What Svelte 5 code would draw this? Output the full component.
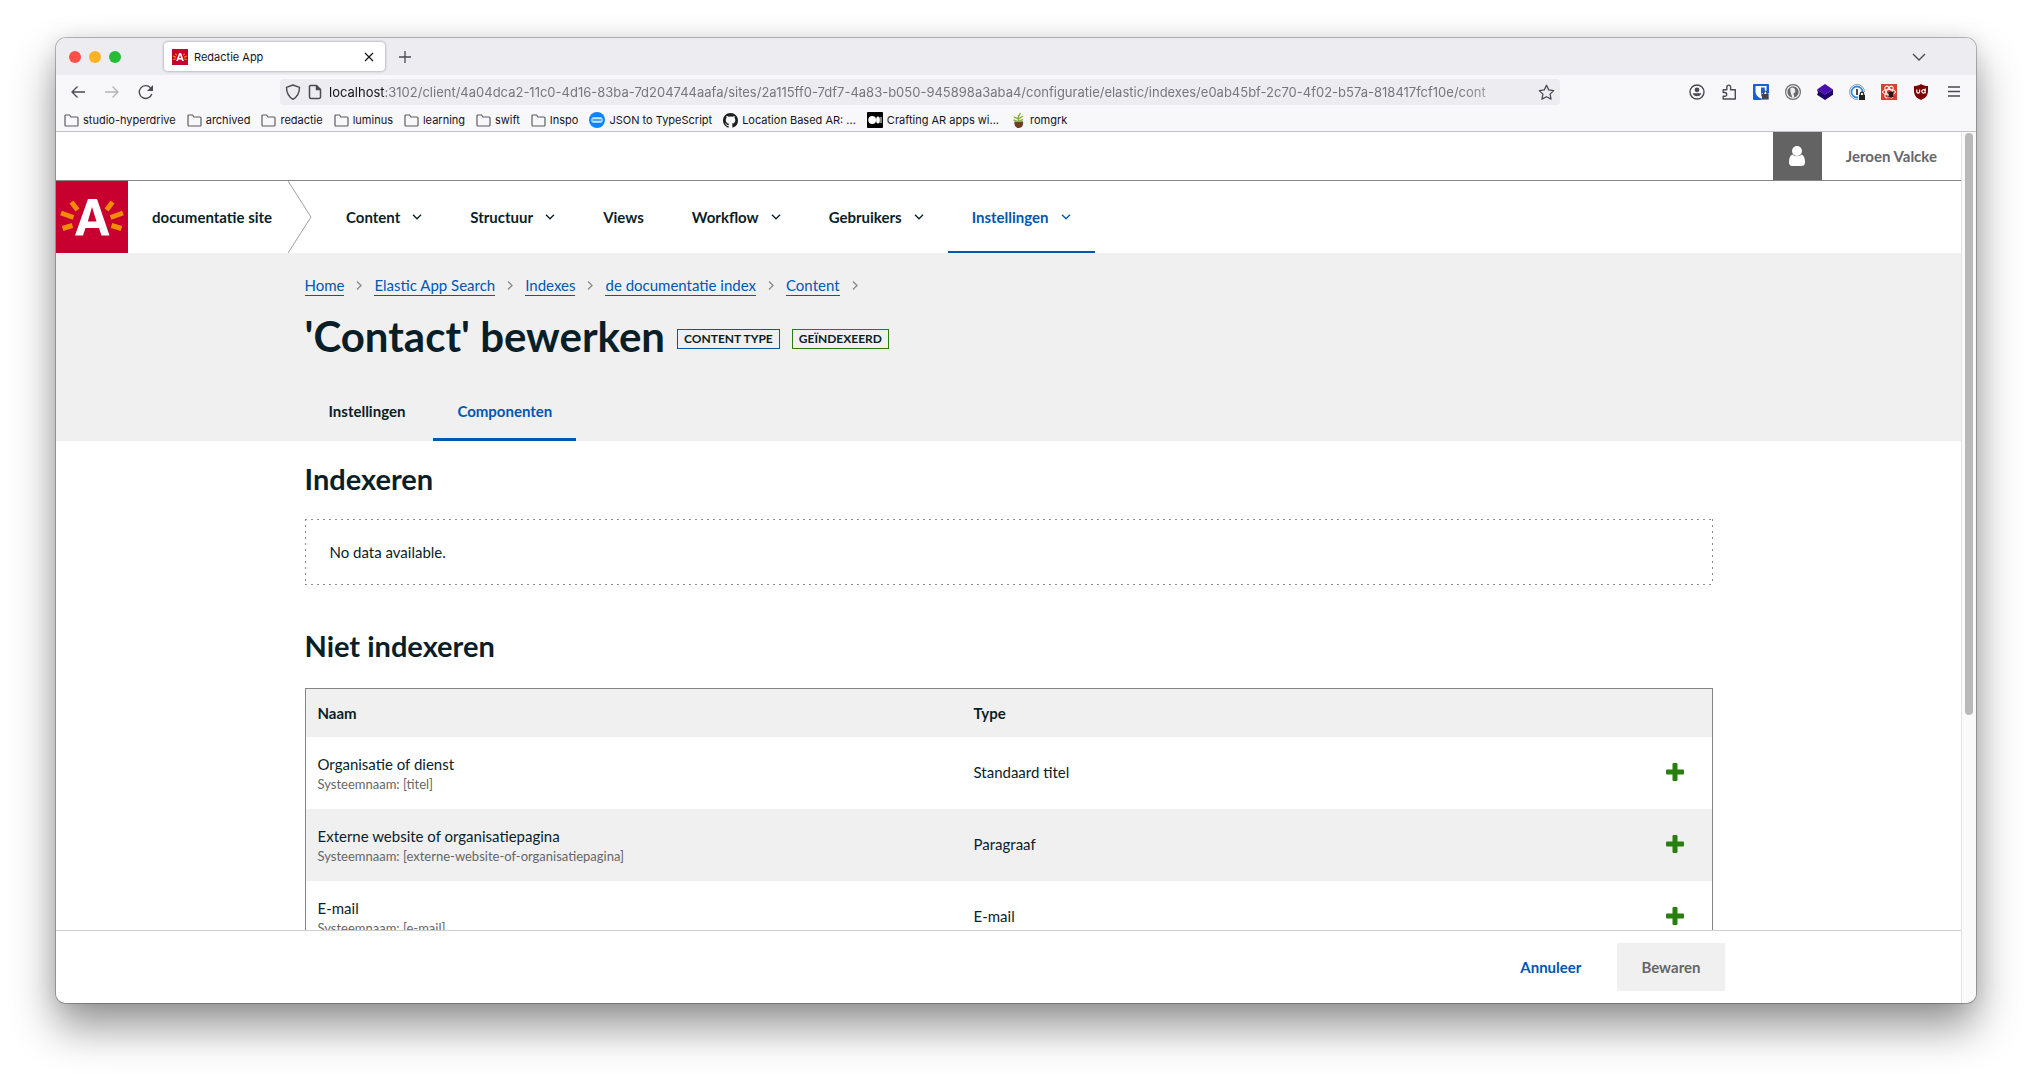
<script>
  const nav = [
    { label: 'Content', menu: true },
    { label: 'Structuur', menu: true },
    { label: 'Views', menu: false },
    { label: 'Workflow', menu: true },
    { label: 'Gebruikers', menu: true },
    { label: 'Instellingen', menu: true, active: true }
  ];
  const crumbs = ['Home', 'Elastic App Search', 'Indexes', 'de documentatie index', 'Content'];
  const folders = ['studio-hyperdrive', 'archived', 'redactie', 'luminus', 'learning', 'swift', 'Inspo'];
  const rows = [
    { name: 'Organisatie of dienst', sys: 'titel', type: 'Standaard titel' },
    { name: 'Externe website of organisatiepagina', sys: 'externe-website-of-organisatiepagina', type: 'Paragraaf' },
    { name: 'E-mail', sys: 'e-mail', type: 'E-mail' }
  ];
</script>

{#snippet brandA()}
  <rect width="72" height="72" fill="#c8002f" />
  <path d="M19 54.500 L32 18 H41 L53.500 54.500 H45.500 L43 47 H29.500 L27 54.500 Z M31.800 40.500 H40.500 L36 26 Z" fill="#fff" fill-rule="evenodd" />
  <g stroke="#f28b00" stroke-width="5">
    <path d="M15.500 21 L21.500 29 M5 32 L17.500 36.500 M6.500 47.500 L16.500 44.500 M56.500 21 L50.500 29 M67 32 L54.500 36.500 M65.500 47.500 L55.500 44.500" />
  </g>
{/snippet}

<div class="desktop">
  <div class="window">
    <div class="tabbar">
      <div class="lights"><i class="red"></i><i class="amber"></i><i class="green"></i></div>
      <div class="browser-tab">
        <svg width="16" height="16" viewBox="0 0 72 72" aria-hidden="true">{@render brandA()}</svg>
        <span>Redactie App</span>
        <button aria-label="Close tab"><svg width="10" height="10" viewBox="0 0 10 10"><path d="M1 1l8 8M9 1l-8 8" stroke="#15141a" stroke-width="1.200" /></svg></button>
      </div>
      <button class="newtab" aria-label="New tab"><svg width="12" height="12" viewBox="0 0 12 12"><path d="M6 0v12M0 6h12" stroke="#4a4954" stroke-width="1.300" /></svg></button>
      <button class="tablist" aria-label="List all tabs"><svg width="14" height="8" viewBox="0 0 14 8"><path d="M1 1l6 6 6-6" fill="none" stroke="#4a4954" stroke-width="1.400" /></svg></button>
    </div>

    <div class="toolbar">
      <div class="history">
        <button aria-label="Back"><svg width="16" height="16" viewBox="0 0 16 16" fill="none" stroke="#4a4954" stroke-width="1.300"><path d="M15 8H2M7.500 2.500L2 8l5.500 5.500" /></svg></button>
        <button aria-label="Forward" disabled><svg width="16" height="16" viewBox="0 0 16 16" fill="none" stroke="#b5b4bb" stroke-width="1.300"><path d="M1 8h13M8.500 2.500L14 8l-5.500 5.500" /></svg></button>
        <button aria-label="Reload"><svg width="16" height="16" viewBox="0 0 16 16" fill="none" stroke="#4a4954" stroke-width="1.400"><path d="M13.800 10A6.400 6.400 0 1 1 12.500 3.800" /><path d="M15 1v6H9z" fill="#4a4954" stroke="none" /></svg></button>
      </div>
      <div class="urlbar">
        <svg width="16" height="16" viewBox="0 0 16 16" fill="none" stroke="#4a4954" stroke-width="1.400" stroke-linejoin="round"><path d="M8 1l6.500 2.300c0 5-1.500 9.200-6.500 12C3 12.500 1.500 8.300 1.500 3.300z" /></svg>
        <svg width="14" height="16" viewBox="0 0 14 16" fill="none" stroke="#4a4954" stroke-width="1.500" stroke-linejoin="round"><path d="M2.500 1.500H8.500L12.500 5.500V13a1.500 1.500 0 0 1-1.500 1.500H3A1.500 1.500 0 0 1 1.500 13V2.500a1 1 0 0 1 1-1z" /><path d="M8.500 1.500V5.500H12.500" fill="#4a4954" /></svg>
        <div class="url"><b>localhost</b>:3102/client/4a04dca2-11c0-4d16-83ba-7d204744aafa/sites/2a115ff0-7df7-4a83-b050-945898a3aba4/configuratie/elastic/indexes/e0ab45bf-2c70-4f02-b57a-818417fcf10e/cont</div>
        <button aria-label="Bookmark this page"><svg width="17" height="17" viewBox="0 0 17 17"><path d="M8.500 1.300l2.200 4.600 5 .7-3.600 3.500.9 5-4.500-2.400L4 15.100l.9-5L1.300 6.600l5-.7z" fill="none" stroke="#4a4954" stroke-width="1.300" stroke-linejoin="round" /></svg></button>
      </div>
      <div class="extensions">
        <svg width="16" height="16" viewBox="0 0 16 16"><circle cx="8" cy="8" r="7" fill="none" stroke="#4a4954" stroke-width="1.400" /><circle cx="8" cy="5.800" r="2.400" fill="#4a4954" /><path d="M3.700 9.300h8.600c-.5 2-2.200 3-4.300 3s-3.800-1-4.300-3z" fill="#4a4954" /></svg>
        <svg width="16" height="16" viewBox="0 0 16 16"><path d="M2.200 5.700h3.600V3a1.900 1.900 0 0 1 3.800 0v2.700h4.700v9.300H2.200V12.300h1.600a1.900 1.900 0 0 0 0-3.800H2.200z" fill="none" stroke="#4a4954" stroke-width="1.400" stroke-linejoin="round" /></svg>
        <svg width="16" height="16" viewBox="0 0 16 16"><rect width="16" height="16" rx="1" fill="#175ddc" /><path d="M2.500 2h11v6c0 3-3 5.500-5.500 6.500-2.500-1-5.500-3.500-5.500-6.500z" fill="#fff" /><path d="M8 3.500h3.800V8c0 2-2.100 3.900-3.800 4.700z" fill="#175ddc" /><path d="M8.500 9h7.500v7H8.500z" fill="#fff" opacity=".6" /><rect x="9" y="10" width="6.500" height="5.300" fill="#444" /><path d="M10.600 10.500V8.700a1.700 1.700 0 0 1 3.400 0V10.500" fill="none" stroke="#444" stroke-width="1.200" /></svg>
        <svg width="16" height="16" viewBox="0 0 16 16"><circle cx="8" cy="8" r="7.400" fill="#fff" stroke="#6a6a6a" stroke-width="1.200" /><circle cx="8" cy="8" r="5.700" fill="#6a6a6a" /><path d="M5.500 4c2-1.200 4.300-.3 4.600 2l.2 2.200-1.800 1 .8 4.300-2 .2c-.8-3-2.800-6.700-1.800-9.700z" fill="#eee" /></svg>
        <svg width="16" height="16" viewBox="0 0 16 16"><path d="M0 5.500l8 5 8-5v5.300L8 16l-8-5.200 1-2.300z" fill="#1d0466" /><path d="M8 0l8 5.500-8 5.200-8-5.200z" fill="#4a0fb0" /></svg>
        <svg width="16" height="16" viewBox="0 0 16 16"><circle cx="8" cy="8" r="7.500" fill="#fff" stroke="#888" stroke-width=".8" /><circle cx="8" cy="8" r="5.500" fill="none" stroke="#2f8ded" stroke-width="1.800" /><path d="M8 5v6" stroke="#333" stroke-width="1.800" /><path d="M9 8h7v8H9z" fill="#f8f7fa" /><rect x="10" y="11" width="6" height="5" fill="#222" /><path d="M11.300 11.500v-1.600a1.700 1.700 0 0 1 3.400 0v1.600" fill="none" stroke="#222" stroke-width="1.200" /></svg>
        <svg width="16" height="16" viewBox="0 0 16 16"><rect width="16" height="16" fill="#d7412f" /><g fill="none" stroke="#fff" stroke-width="1"><ellipse cx="8" cy="8" rx="6.500" ry="2.600" /><ellipse cx="8" cy="8" rx="6.500" ry="2.600" transform="rotate(60 8 8)" /><ellipse cx="8" cy="8" rx="6.500" ry="2.600" transform="rotate(120 8 8)" /></g><ellipse cx="10" cy="10.500" rx="2.400" ry="3.200" fill="#2a1512" /><path d="M6.500 8l7 5M13 7.500l-6.500 6" stroke="#2a1512" stroke-width=".8" /></svg>
        <svg width="16" height="16" viewBox="0 0 16 16"><path d="M8 0c2 1.500 4.500 2 7 2v5c0 4.500-3 7.500-7 9-4-1.500-7-4.500-7-9V2c2.500 0 5-.5 7-2z" fill="#800000" /><path d="M3.800 5.500v2.300a1.400 1.400 0 0 0 2.800 0V5.500M12.200 4.500v4.700M12.200 7.600a1.700 1.700 0 1 1 0-.4" fill="none" stroke="#fff" stroke-width="1.200" /></svg>
        <svg width="18" height="16" viewBox="0 0 18 16"><path d="M3 3h12M3 7.500h12M3 12h12" stroke="#4a4954" stroke-width="1.300" /></svg>
      </div>
    </div>

    <div class="bookmarks">
      {#each folders as f}
        <a href="#{f}"><svg width="15" height="13" viewBox="0 0 15 13"><path d="M1 2a1 1 0 0 1 1-1h3.500l1.500 2H13a1 1 0 0 1 1 1v7a1 1 0 0 1-1 1H2a1 1 0 0 1-1-1z" fill="none" stroke="#5b5b66" stroke-width="1.200" /></svg>{f}</a>
      {/each}
      <a href="#json"><svg width="16" height="16" viewBox="0 0 16 16"><circle cx="8" cy="8" r="8" fill="#0a84ff" /><rect x="2" y="5.500" width="12" height="5" rx="2" fill="#8cc6ff" /><path d="M3.500 6h9M3.500 10h9" stroke="#fff" stroke-width="1" /><path d="M4 8h8" stroke="#0a84ff" stroke-width="1" /></svg>JSON to TypeScript</a>
      <a href="#ar"><svg width="15" height="15" viewBox="0 0 16 16"><path fill="#1b1f23" d="M8 0C3.580 0 0 3.580 0 8c0 3.540 2.290 6.530 5.470 7.590.4.070.55-.17.550-.38v-1.490c-2.010.37-2.530-.49-2.690-.94-.09-.23-.48-.94-.82-1.130-.28-.15-.68-.52-.01-.53.630-.01 1.080.58 1.230.82.720 1.210 1.870.870 2.330.66.070-.52.280-.87.510-1.070-1.780-.2-3.640-.89-3.640-3.950 0-.87.310-1.590.820-2.150-.08-.2-.36-1.020.08-2.120 0 0 .67-.21 2.200.82a7.600 7.600 0 0 1 4 0c1.530-1.040 2.200-.82 2.200-.82.440 1.100.16 1.920.08 2.120.51.560.82 1.270.82 2.150 0 3.070-1.870 3.750-3.650 3.950.29.250.54.730.54 1.480v2.200c0 .21.150.46.550.38A8 8 0 0 0 16 8c0-4.420-3.580-8-8-8z" /></svg>Location Based AR: ...</a>
      <a href="#crafting"><svg width="16" height="16" viewBox="0 0 16 16"><rect width="16" height="16" rx="1" fill="#000" /><circle cx="5.200" cy="8" r="3.900" fill="#fff" /><ellipse cx="11" cy="8" rx="1.900" ry="3.600" fill="#fff" /><rect x="13.500" y="5" width="1" height="6" fill="#fff" /></svg>Crafting AR apps wi...</a>
      <a href="#romgrk"><svg width="16" height="16" viewBox="0 0 16 16"><path d="M4.500 9.500h8.500c.5 3.500-.5 6.500-4.200 6.500s-4.800-3-4.300-6.500z" fill="#6b3f24" /><path d="M8.500 9.500V3M8.500 7L4 5M8.500 7l4.500-3M8.500 4.500l2-3.500M7.500 9.500L3.500 8M9.500 9l3.500-1.500" stroke="#8cb43c" stroke-width="1.500" fill="none" /></svg>romgrk</a>
    </div>

    <div class="viewport">
      <div class="page">
        <div class="userbar">
          <div class="avatar"><svg width="16" height="20" viewBox="0 0 16 20" fill="#fff"><circle cx="8" cy="5" r="5" /><path d="M3.500 8.500C5 10.800 11 10.800 12.500 8.500 15 9.500 16 12.500 16 16c0 2.500-1 4-3.500 4h-9C1 20 0 18.500 0 16c0-3.500 1-6.500 3.500-7.500z" /></svg></div>
          <span class="user">Jeroen Valcke</span>
        </div>
        <header class="mainnav">
          <svg class="logo" width="72" height="72" viewBox="0 0 72 72" role="img" aria-label="Antwerpen">{@render brandA()}</svg>
          <span class="site">documentatie site</span>
          <svg class="divider" width="24" height="72" viewBox="0 0 24 72"><path d="M0 0l23 36L0 72" fill="none" stroke="#a0a0a0" /></svg>
          <nav>
            {#each nav as item}
              <a href="#{item.label}" class:active={item.active}>{item.label}{#if item.menu}<svg width="10" height="6" viewBox="0 0 10 6"><path d="M1 .800l4 4 4-4" fill="none" stroke="currentColor" stroke-width="1.300" /></svg>{/if}</a>
            {/each}
          </nav>
        </header>
        <section class="hero">
          <div class="container">
            <nav class="crumbs" aria-label="Breadcrumb">
              {#each crumbs as c}
                <a href="#{c}">{c}</a><svg width="6" height="9" viewBox="0 0 6 9"><path d="M1 .5l4 4-4 4" fill="none" stroke="#8a8a8a" stroke-width="1.300" /></svg>
              {/each}
            </nav>
            <div class="title">
              <h1>'Contact' bewerken</h1>
              <span class="badge">CONTENT TYPE</span>
              <span class="badge ok">GEÏNDEXEERD</span>
            </div>
            <nav class="tabs">
              <a href="#instellingen">Instellingen</a>
              <a href="#componenten" class="active">Componenten</a>
            </nav>
          </div>
        </section>
        <main class="container">
          <h2>Indexeren</h2>
          <p class="empty">No data available.</p>
          <h2>Niet indexeren</h2>
          <table>
            <thead><tr><th class="name">Naam</th><th>Type</th><th class="act" aria-label="Acties"></th></tr></thead>
            <tbody>
              {#each rows as r}
                <tr>
                  <td>{r.name}<small>Systeemnaam: [{r.sys}]</small></td>
                  <td>{r.type}</td>
                  <td class="act"><button aria-label="{r.name} toevoegen"><svg width="18" height="18" viewBox="0 0 18 18" fill="#267f0e"><rect x="6.500" y="0" width="5" height="18" rx="1" /><rect x="0" y="6.500" width="18" height="5" rx="1" /></svg></button></td>
                </tr>
              {/each}
            </tbody>
          </table>
        </main>
        <footer>
          <div class="actions">
            <button class="cancel">Annuleer</button>
            <button class="save" disabled>Bewaren</button>
          </div>
        </footer>
      </div>
      <div class="scrollbar"><div class="thumb"></div></div>
    </div>
  </div>
</div>

<style>
  :global(body) { margin: 0; background: #fff; }
  * { box-sizing: border-box; }
  svg { display: block; flex: none; }
  button { border: 0; padding: 0; background: none; font: inherit; color: inherit; display: block; }
  a { color: inherit; text-decoration: none; }
  .desktop { height: 100vh; padding: 38px 56px 75px; display: flex; overflow: hidden; }
  .window {
    flex: 1; min-width: 0; display: flex; flex-direction: column; overflow: hidden; border-radius: 10px; background: #fff;
    font-family: Inter, sans-serif; font-size: 11px; color: #15141a;
    box-shadow: 0 0 0 1px rgba(0, 0, 0, .25), 0 24px 44px rgba(0, 0, 0, .42), 0 0 20px rgba(0, 0, 0, .1);
  }
  .tabbar { height: 37px; flex: none; background: #edecf1; display: flex; align-items: center; padding: 0 50px 0 13px; }
  .lights { display: flex; gap: 8px; width: 95px; }
  .lights i { width: 12px; height: 12px; border-radius: 50%; }
  .red { background: #ff5048; }
  .amber { background: #fdb225; }
  .green { background: #24bd35; }
  .browser-tab { width: 221px; height: 29px; background: #fff; border-radius: 4px; box-shadow: 0 0 3px rgba(0, 0, 0, .4); display: flex; align-items: center; gap: 6px; padding: 0 11px 0 8px; }
  .browser-tab span { flex: 1; }
  .newtab { margin-left: 14px; }
  .tablist { margin-left: auto; }
  .toolbar { height: 34px; flex: none; background: #f8f7fa; display: flex; align-items: center; padding: 0 13px 0 14px; }
  .history { display: flex; gap: 18px; flex: 0 0 210px; }
  .urlbar { flex: 0 1 1280px; min-width: 0; height: 26px; border-radius: 4px; background: #edecf1; display: flex; align-items: center; gap: 7px; padding: 0 5px; }
  .url { flex: 1; min-width: 0; overflow: hidden; white-space: nowrap; font-size: 13px; color: #77767e; mask-image: linear-gradient(to left, transparent, #000 70px); }
  .url b { font-weight: 400; color: #15141a; }
  .extensions { margin-left: auto; display: flex; gap: 16px; }
  .bookmarks { height: 23px; flex: none; background: #f8f7fa; border-bottom: 1px solid #c3c3c7; display: flex; align-items: center; gap: 11px; padding: 0 8px; white-space: nowrap; }
  .bookmarks a { display: flex; align-items: center; gap: 4px; }
  .viewport { flex: 1; min-height: 0; display: flex; }
  .page { flex: 1; min-width: 0; display: flex; flex-direction: column; font-family: Lato, sans-serif; font-size: 15px; line-height: 24px; color: #0a1e28; }
  .scrollbar { width: 15px; flex: none; border-left: 1px solid #e4e4e4; background: #fafafa; padding: 1px 3px; }
  .thumb { height: 582px; width: 8px; border-radius: 4px; background: #b9b9b9; }
  .userbar { height: 49px; flex: none; border-bottom: 1px solid #858585; display: flex; justify-content: flex-end; font-weight: 700; color: #666; }
  .avatar { width: 49px; background: #636363; display: flex; align-items: center; justify-content: center; }
  .user { padding: 12px 24px; }
  .mainnav { height: 72px; flex: none; display: flex; align-items: center; font-weight: 700; }
  .site { margin: 0 16px 0 24px; }
  .mainnav nav { display: flex; align-self: stretch; margin-left: 10px; }
  .mainnav nav a { display: flex; align-items: center; gap: 12px; padding: 2px 24px 0; border-bottom: 2px solid transparent; }
  .mainnav nav a.active { color: #0057b0; border-color: #0057b0; }
  .hero { background: #f0f0f0; flex: none; }
  .container { width: 100%; max-width: 1408px; margin: 0 auto; }
  .crumbs { display: flex; align-items: center; gap: 12px; padding-top: 22px; color: #0057b0; }
  .crumbs a { border-bottom: 1px solid; line-height: 20px; }
  .title { display: flex; align-items: center; gap: 12px; padding-top: 12px; }
  h1 { margin: 0; padding-bottom: 6px; font-size: 42px; line-height: 56px; }
  h2 { margin: 0; font-size: 29px; line-height: 36px; }
  .badge { border: 1px solid #0057b0; padding: 0 6px; font-size: 12px; line-height: 18px; font-weight: 700; }
  .ok { border-color: #267f0e; }
  .tabs { display: flex; gap: 4px; padding-top: 14px; font-weight: 700; }
  .tabs a { padding: 15px 24px; border-bottom: 3px solid transparent; }
  .tabs .active { color: #0057b0; border-color: #0057b0; }
  main { flex: 1; min-height: 0; overflow: hidden; padding-top: 20px; }
  .empty {
    --dots: #8a8a8a 0 2px, transparent 2px 6px;
    margin: 22px 0 43px; padding: 21px 25px;
    background:
      repeating-linear-gradient(90deg, var(--dots)) top / 100% 1px no-repeat,
      repeating-linear-gradient(90deg, var(--dots)) bottom / 100% 1px no-repeat,
      repeating-linear-gradient(180deg, var(--dots)) left / 1px 100% no-repeat,
      repeating-linear-gradient(180deg, var(--dots)) right / 1px 100% no-repeat;
  }
  table { width: 100%; margin-top: 24px; border: 1px solid #858585; border-collapse: separate; border-spacing: 0; table-layout: fixed; }
  th { height: 48px; padding: 0 12px; text-align: left; background: #f0f0f0; }
  td { height: 72px; padding: 0 12px 3px; }
  .name { width: 656px; }
  .act { width: 74px; padding: 0 28px 3px; }
  small { display: block; font-size: 13px; line-height: 16px; color: #666; }
  tbody tr:nth-child(even) { background: #f0f0f0; }
  footer { flex: none; border-top: 1px solid #cfcfcf; background: #fff; padding: 12px 0; }
  .actions { max-width: 1432px; margin: 0 auto; display: flex; justify-content: flex-end; align-items: center; gap: 36px; font-weight: 700; }
  .cancel { color: #0057b0; }
  .save { background: #f0f0f0; color: #666; padding: 12px 24px; }
</style>
